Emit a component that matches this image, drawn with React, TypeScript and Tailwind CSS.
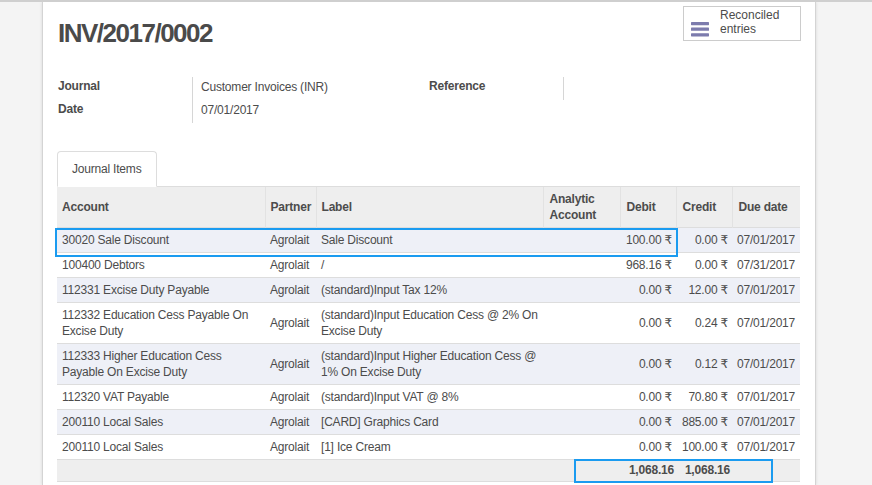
import React from "react";

type Row = {
  account: React.ReactNode;
  partner: string;
  label: React.ReactNode;
  debit: string;
  credit: string;
  due: string;
};

const rows: Row[] = [
  { account: "30020 Sale Discount", partner: "Agrolait", label: "Sale Discount", debit: "100.00 ₹", credit: "0.00 ₹", due: "07/01/2017" },
  { account: "100400 Debtors", partner: "Agrolait", label: "/", debit: "968.16 ₹", credit: "0.00 ₹", due: "07/31/2017" },
  { account: "112331 Excise Duty Payable", partner: "Agrolait", label: "(standard)Input Tax 12%", debit: "0.00 ₹", credit: "12.00 ₹", due: "07/01/2017" },
  {
    account: (<>112332 Education Cess Payable On<br />Excise Duty</>),
    partner: "Agrolait",
    label: (<>(standard)Input Education Cess @ 2% On<br />Excise Duty</>),
    debit: "0.00 ₹", credit: "0.24 ₹", due: "07/01/2017",
  },
  {
    account: (<>112333 Higher Education Cess<br />Payable On Excise Duty</>),
    partner: "Agrolait",
    label: (<>(standard)Input Higher Education Cess @<br />1% On Excise Duty</>),
    debit: "0.00 ₹", credit: "0.12 ₹", due: "07/01/2017",
  },
  { account: "112320 VAT Payable", partner: "Agrolait", label: "(standard)Input VAT @ 8%", debit: "0.00 ₹", credit: "70.80 ₹", due: "07/01/2017" },
  { account: "200110 Local Sales", partner: "Agrolait", label: "[CARD] Graphics Card", debit: "0.00 ₹", credit: "885.00 ₹", due: "07/01/2017" },
  { account: "200110 Local Sales", partner: "Agrolait", label: "[1] Ice Cream", debit: "0.00 ₹", credit: "100.00 ₹", due: "07/01/2017" },
];

function BarsIcon() {
  return (
    <svg width="18" height="15" viewBox="0 0 18 15" className="shrink-0">
      <rect x="0" y="0" width="18" height="3.2" rx="0.6" fill="#7c7bad" />
      <rect x="0" y="5.6" width="18" height="3.2" rx="0.6" fill="#7c7bad" />
      <rect x="0" y="11.2" width="18" height="3.2" rx="0.6" fill="#7c7bad" />
    </svg>
  );
}

export default function App() {
  return (
    <div className="h-[485px] w-full overflow-hidden bg-[#f4f4f4] border-t-2 border-[#cfcfcf] font-['Liberation_Sans','DejaVu_Sans',Arial,sans-serif] text-[12px] tracking-[-0.2px] text-[#4c4c4c]">
      <div className="flex h-full">
        <div className="w-[42px] shrink-0" />
        <div className="w-[774px] shrink-0 h-full bg-white border-l border-r border-[#d4d4d4] shadow-[0_0_3px_rgba(0,0,0,0.12)] px-[14px]">
          {/* Header */}
          <div className="flex items-start justify-between">
            <h1 className="mt-[16px] ml-[1px] text-[26px] leading-[30px] font-bold tracking-[-1.5px] text-[#4a4a4a]">
              INV/2017/0002
            </h1>
            <div className="mt-[4px] w-[118px] h-[35px] border border-[#cccccc] bg-white flex items-start pl-[7px]">
              <div className="mt-[15px]">
                <BarsIcon />
              </div>
              <div className="ml-[11px] pt-[1px] leading-[14px] tracking-normal">
                Reconciled
                <br />
                entries
              </div>
            </div>
          </div>

          {/* Fields */}
          <div className="mt-[29px] grid grid-cols-2">
            <div className="flex flex-col">
              <div className="flex h-[23px]">
                <div className="w-[135px] pl-[1px] font-bold leading-[18px]">Journal</div>
                <div className="flex-1 border-l border-[#d6d6d6] pl-[8px] leading-[20px]">Customer Invoices (INR)</div>
              </div>
              <div className="flex h-[23px]">
                <div className="w-[135px] pl-[1px] font-bold leading-[18px]">Date</div>
                <div className="flex-1 border-l border-[#d6d6d6] pl-[8px] leading-[20px]">07/01/2017</div>
              </div>
            </div>
            <div className="flex flex-col">
              <div className="flex h-[23px]">
                <div className="w-[134px] font-bold leading-[18px]">Reference</div>
                <div className="flex-1 border-l border-[#d6d6d6]" />
              </div>
            </div>
          </div>

          {/* Tabs */}
          <div className="mt-[28px] flex border-b border-[#dddddd] w-[743px]">
            <div className="-mb-px w-[100px] h-[36px] border border-[#dddddd] border-b-white bg-white rounded-t-[4px] pl-[14px] leading-[35px]">
              Journal Items
            </div>
          </div>

          {/* Table */}
          <div className="relative w-[743px]">
            <table className="w-[743px] table-fixed border-collapse">
              <colgroup>
                <col className="w-[208px]" />
                <col className="w-[51px]" />
                <col className="w-[227px]" />
                <col className="w-[77px]" />
                <col className="w-[56px]" />
                <col className="w-[56px]" />
                <col className="w-[68px]" />
              </colgroup>
              <thead>
                <tr className="bg-[#eeeeee] font-bold text-left leading-[16px]">
                  <th className="py-[4px] pl-[5px] h-[40px] font-bold">Account</th>
                  <th className="py-[4px] pl-[5px] font-bold border-l border-[#e2e2e2]">Partner</th>
                  <th className="py-[4px] pl-[5px] font-bold border-l border-[#e2e2e2]">Label</th>
                  <th className="py-[4px] pl-[6px] font-bold border-l border-[#e2e2e2]">
                    Analytic
                    <br />
                    Account
                  </th>
                  <th className="py-[4px] pl-[6px] font-bold border-l border-[#e2e2e2]">Debit</th>
                  <th className="py-[4px] pl-[6px] font-bold border-l border-[#e2e2e2]">Credit</th>
                  <th className="py-[4px] pl-[6px] font-bold border-l border-[#e2e2e2] whitespace-nowrap">Due date</th>
                </tr>
              </thead>
              <tbody className="leading-[16px]">
                {rows.map((r, i) => (
                  <tr key={i} className={`border-t border-[#dddddd] ${i % 2 === 0 ? "bg-[#eef0f7]" : "bg-white"}`}>
                    <td className="py-[4px] pl-[5px] whitespace-nowrap align-middle">{r.account}</td>
                    <td className="py-[4px] pl-[5px] whitespace-nowrap align-middle">{r.partner}</td>
                    <td className="py-[4px] pl-[5px] whitespace-nowrap align-middle">{r.label}</td>
                    <td className="py-[4px]" />
                    <td className="py-[4px] pr-[4px] text-right whitespace-nowrap align-middle">{r.debit}</td>
                    <td className="py-[4px] pr-[4px] text-right whitespace-nowrap align-middle">{r.credit}</td>
                    <td className="py-[4px] pl-[5px] whitespace-nowrap align-middle">{r.due}</td>
                  </tr>
                ))}
                <tr className="border-t border-b border-[#dddddd] bg-[#eeeeee] font-bold">
                  <td className="pt-[2px] pb-[3px]" />
                  <td />
                  <td />
                  <td />
                  <td className="pt-[2px] pb-[3px] pr-[2px] text-right whitespace-nowrap">1,068.16</td>
                  <td className="pt-[2px] pb-[3px] pr-[2px] text-right whitespace-nowrap">1,068.16</td>
                  <td />
                </tr>
              </tbody>
            </table>
            <div className="absolute left-[-2px] top-[41px] w-[623px] h-[29px] border-2 border-[#1a9bf0] pointer-events-none" />
            <div className="absolute left-[517px] top-[272px] w-[199px] h-[24px] border-2 border-[#1a9bf0] pointer-events-none" />
          </div>
        </div>
      </div>
    </div>
  );
}
